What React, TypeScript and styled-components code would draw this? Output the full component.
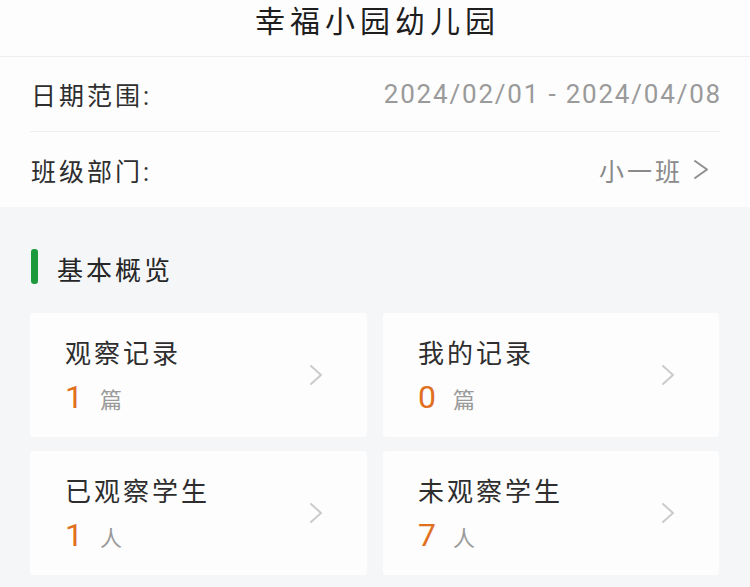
import React from 'react';
import styled, { createGlobalStyle } from 'styled-components';

const GlobalStyle = createGlobalStyle`
  html, body {
    margin: 0;
    padding: 0;
    background: #f5f6f8;
    font-family: Roboto, "Noto Sans CJK SC", "Noto Sans", sans-serif;
  }
`;

const Page = styled.div`
  width: 750px;
  min-height: 587px;
  background: #f5f6f8;
`;

const Header = styled.header`
  height: 57px;
  background: #fdfdfd;
  border-bottom: 1px solid #efefef;
  box-sizing: border-box;
  display: flex;
  justify-content: center;
  padding-top: 1px;
`;

const Title = styled.h1`
  margin: 0 0 0 5px;
  font-size: 30px;
  line-height: 42px;
  font-weight: 400;
  letter-spacing: 5px;
  color: #1e1e1e;
`;

const FilterPanel = styled.section`
  background: #fdfdfd;
  padding: 0 30px;
`;

const FilterRow = styled.div<{ $last?: boolean }>`
  height: 75px;
  display: flex;
  align-items: center;
  justify-content: space-between;
  border-bottom: ${(p) => (p.$last ? 'none' : '1px solid #efefef')};
  box-sizing: border-box;
  padding-left: 1px;
`;

const Label = styled.span`
  font-size: 25px;
  letter-spacing: 3px;
  color: #2e2e2e;
`;

const DateValue = styled.span`
  font-size: 26px;
  letter-spacing: 1.8px;
  color: #9a9a9a;
  margin-right: -2px;
`;

const Picker = styled.span`
  display: flex;
  align-items: center;
  gap: 10px;
  font-size: 25px;
  letter-spacing: 3px;
  color: #8a8a8a;
  margin-right: 11px;
`;

const Overview = styled.section`
  padding: 42px 30px 10px;
`;

const SectionHead = styled.div`
  display: flex;
  align-items: center;
  gap: 19px;
  height: 35px;
  margin-bottom: 29px;
`;

const GreenBar = styled.span`
  width: 7px;
  height: 35px;
  border-radius: 3px;
  background: #1c9a3c;
  margin-left: 1px;
`;

const SectionTitle = styled.h2`
  margin: 0;
  font-size: 26px;
  font-weight: 400;
  letter-spacing: 3px;
  color: #262626;
  padding-top: 4px;
`;

const CardGrid = styled.div`
  display: grid;
  grid-template-columns: 337px 336px;
  column-gap: 16px;
  row-gap: 14px;
`;

const Card = styled.div`
  height: 124px;
  background: #fdfdfd;
  border-radius: 3px;
  display: flex;
  align-items: center;
  padding: 0 44px 0 35px;
  box-sizing: border-box;
`;

const CardBody = styled.div`
  flex: 1;
  align-self: flex-start;
  padding-top: 21px;
`;

const CardTitle = styled.div`
  font-size: 26px;
  line-height: 40px;
  letter-spacing: 3px;
  color: #2e2e2e;
  margin-bottom: 4px;
`;

const CountRow = styled.div`
  display: flex;
  align-items: baseline;
  line-height: 38px;
`;

const Count = styled.span`
  font-size: 32px;
  color: #e0701e;
  width: 35px;
`;

const Unit = styled.span`
  font-size: 22px;
  letter-spacing: 1px;
  color: #9a9a9a;
`;

function Chevron({ color, w, h }: { color: string; w: number; h: number }) {
  return (
    <svg width={w} height={h} viewBox={`0 0 ${w} ${h}`} fill="none">
      <polyline
        points={`2,2 ${w - 2},${h / 2} 2,${h - 2}`}
        stroke={color}
        strokeWidth="2"
        strokeLinecap="round"
        strokeLinejoin="round"
      />
    </svg>
  );
}

const stats = [
  { title: '观察记录', count: 1, unit: '篇' },
  { title: '我的记录', count: 0, unit: '篇' },
  { title: '已观察学生', count: 1, unit: '人' },
  { title: '未观察学生', count: 7, unit: '人' },
];

export default function App() {
  return (
    <Page>
      <GlobalStyle />
      <Header>
        <Title>幸福小园幼儿园</Title>
      </Header>
      <FilterPanel>
        <FilterRow>
          <Label>日期范围:</Label>
          <DateValue>2024/02/01 - 2024/04/08</DateValue>
        </FilterRow>
        <FilterRow $last>
          <Label>班级部门:</Label>
          <Picker>
            小一班
            <Chevron color="#8f8f8f" w={16} h={21} />
          </Picker>
        </FilterRow>
      </FilterPanel>
      <Overview>
        <SectionHead>
          <GreenBar />
          <SectionTitle>基本概览</SectionTitle>
        </SectionHead>
        <CardGrid>
          {stats.map((s) => (
            <Card key={s.title}>
              <CardBody>
                <CardTitle>{s.title}</CardTitle>
                <CountRow>
                  <Count>{s.count}</Count>
                  <Unit>{s.unit}</Unit>
                </CountRow>
              </CardBody>
              <Chevron color="#cbcbcb" w={14} h={22} />
            </Card>
          ))}
        </CardGrid>
      </Overview>
    </Page>
  );
}
